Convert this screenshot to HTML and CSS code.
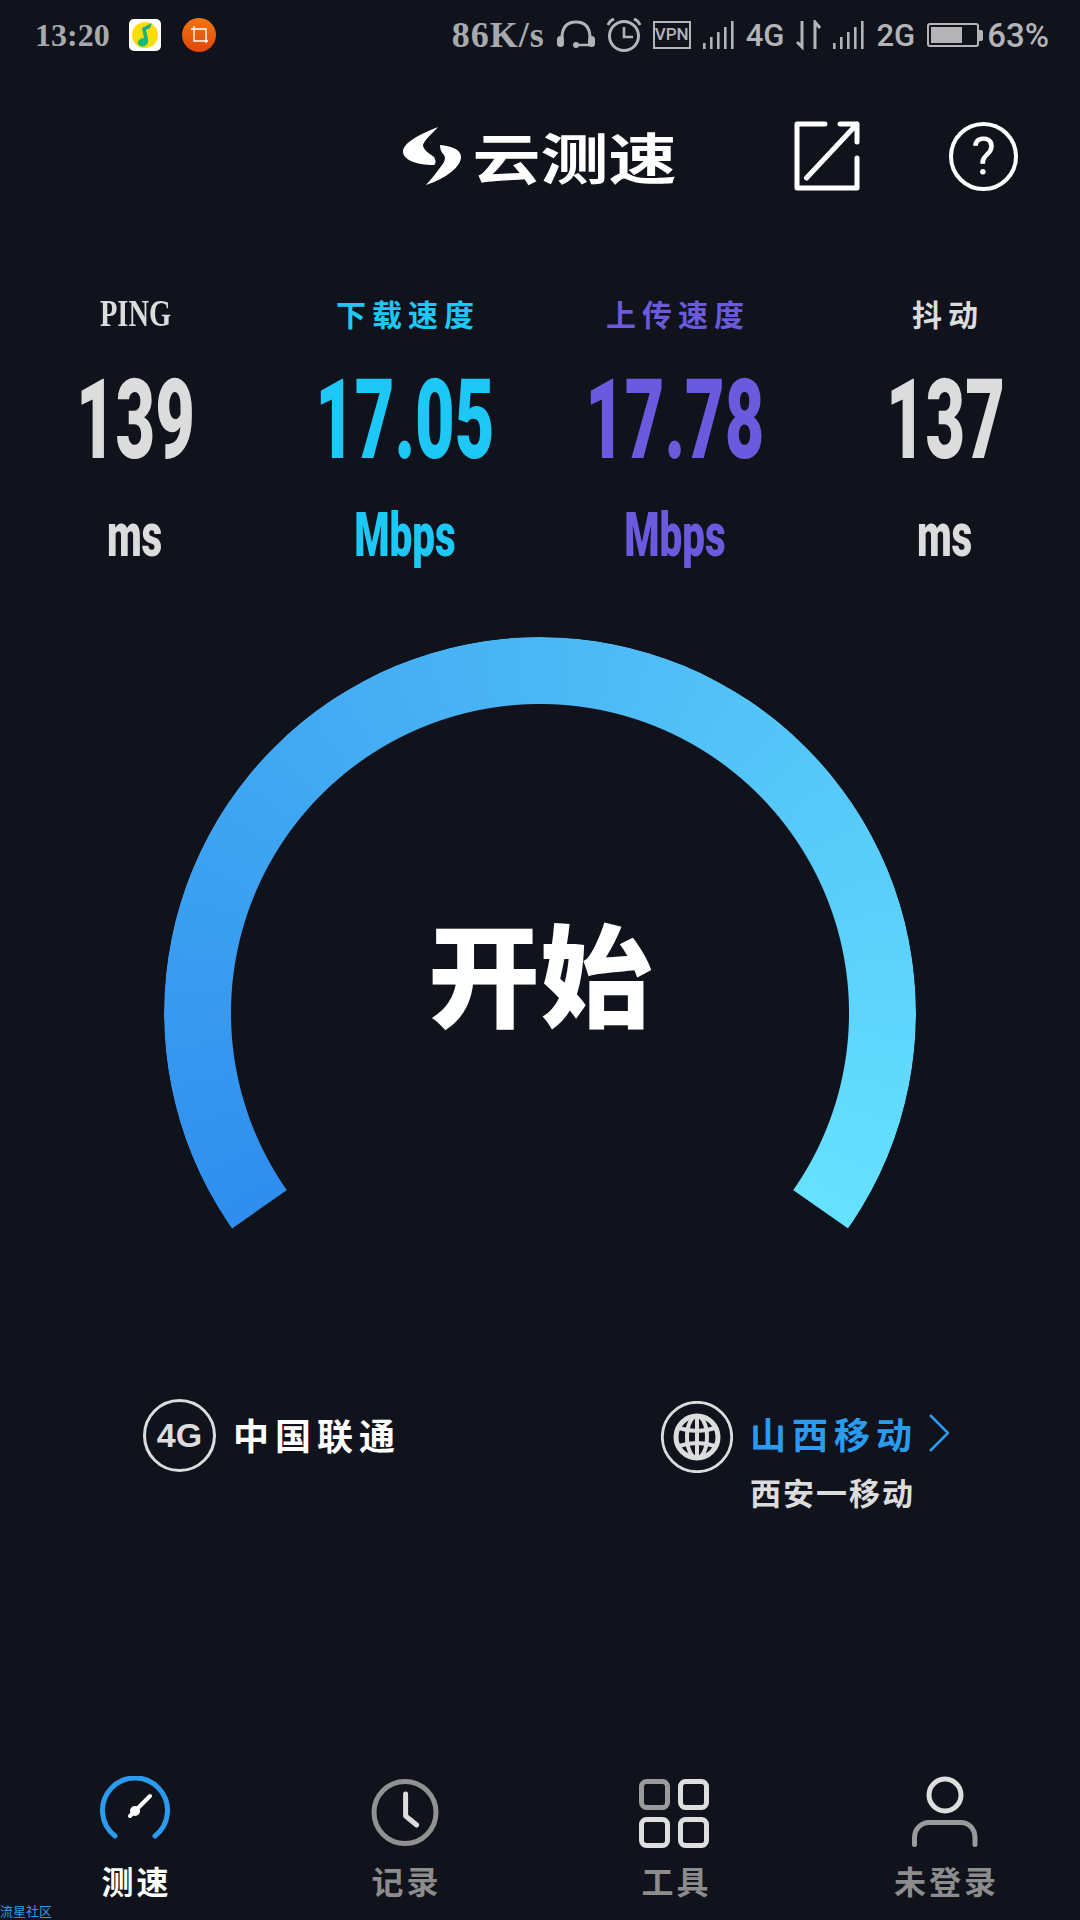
FILE: index.html
```html
<!DOCTYPE html>
<html lang="zh">
<head>
<meta charset="utf-8">
<title>云测速</title>
<link rel="stylesheet" href="styles.css">
</head>
<body>
<div class="app">
  <div class="status">
    <div class="status-left">
      <span class="time">13:20</span>
      <svg class="qq" viewBox="0 0 32 32"><defs><linearGradient id="note" x1="0" y1="0" x2="0" y2="1"><stop offset="0" stop-color="#12a8a0"/><stop offset="1" stop-color="#14c06f"/></linearGradient></defs><rect width="32" height="32" rx="5" fill="#fff"/><circle cx="16" cy="16" r="13" fill="#ffdd00"/><path d="M14 14 L13 9 L23 4 L21 9 L17 11 L19 20 C20 26 15 29 11 27 C7 25 9 19 15 19 Z" fill="url(#note)"/></svg>
      <svg class="crop" viewBox="0 0 34 34"><defs><linearGradient id="og" x1="0" y1="0" x2="0" y2="1"><stop offset="0" stop-color="#f0750f"/><stop offset="1" stop-color="#e2460c"/></linearGradient></defs><circle cx="17" cy="17" r="17" fill="url(#og)"/><path d="M9 11H24V25M12 8V23H26" fill="none" stroke="#fff" stroke-width="1.4"/></svg>
    </div>
    <div class="status-right">
      <span class="speed">86K/s</span>
      <svg class="ic-head" viewBox="0 0 38 30"><path d="M5 18C5 7 10 2 19 2S33 7 33 18" fill="none" stroke="#b4b4b8" stroke-width="3"/><rect x="0" y="16" width="7" height="11" rx="3.5" fill="#b4b4b8"/><rect x="31" y="16" width="7" height="11" rx="3.5" fill="#b4b4b8"/><circle cx="19" cy="25" r="3" fill="#b4b4b8"/><path d="M19 25H33" stroke="#b4b4b8" stroke-width="2.5"/></svg>
      <svg class="ic-alarm" viewBox="0 0 34 34"><circle cx="17" cy="18" r="14.5" fill="none" stroke="#b4b4b8" stroke-width="3"/><path d="M17 9V19H26" fill="none" stroke="#b4b4b8" stroke-width="2.6"/><path d="M1 7C2 4 4 2 7 1M33 7C32 4 30 2 27 1" fill="none" stroke="#b4b4b8" stroke-width="3"/></svg>
      <span class="vpn">VPN</span>
      <svg class="ic-signal" viewBox="0 0 31 28"><rect x="0" y="22" width="2.6" height="6" fill="#b4b4b8"/><rect x="7" y="16" width="2.6" height="12" fill="#b4b4b8"/><rect x="14" y="11" width="2.6" height="17" fill="#b4b4b8"/><rect x="21" y="6" width="2.6" height="22" fill="#b4b4b8"/><rect x="28" y="0" width="2.6" height="28" fill="#b4b4b8"/></svg>
      <span class="net">4G</span>
      <svg class="ic-arrows" viewBox="0 0 25 30"><path d="M6 1V27L1 22M19 29V2L24 8" fill="none" stroke="#b4b4b8" stroke-width="3"/></svg>
      <svg class="ic-signal" viewBox="0 0 31 28"><rect x="0" y="22" width="2.6" height="6" fill="#b4b4b8"/><rect x="7" y="16" width="2.6" height="12" fill="#b4b4b8"/><rect x="14" y="11" width="2.6" height="17" fill="#b4b4b8"/><rect x="21" y="6" width="2.6" height="22" fill="#b4b4b8"/><rect x="28" y="0" width="2.6" height="28" fill="#b4b4b8"/></svg>
      <span class="net">2G</span>
      <div class="battery"><div class="battery-body"><div class="battery-level"></div></div><div class="battery-cap"></div></div>
      <span class="percent">63%</span>
    </div>
  </div>

  <header class="header">
    <div></div>
    <div class="logo">
      <svg class="logo-mark" viewBox="0 0 58 58"><path d="M35 0C15 8 0 16 0 25C0 32 12 38 31 38C33 37 33 33 31 30C27 27 20 23 20 18C22 12 30 6 35 0Z" fill="#fff"/><path d="M23 58C42 52 58 40 58 30C58 22 48 19 37 18C37 22 38 25 41 28C44 33 39 38 36 42C32 48 27 53 23 58Z" fill="#fff"/></svg>
      <span class="logo-text">云测速</span>
    </div>
    <div class="actions">
      <svg class="share" viewBox="0 0 66 70"><path d="M31 3H3V67H63V37M46 3H63V21M63 3L12.500 57" fill="none" stroke="#fff" stroke-width="5" stroke-linecap="round" stroke-linejoin="round"/></svg>
      <div class="help">?</div>
    </div>
  </header>

  <section class="stats">
    <div class="stat stat-grey"><div class="stat-label"><span class="latin">PING</span></div><div class="stat-num"><span class="squeeze">139</span></div><div class="stat-unit"><span class="squeeze">ms</span></div></div>
    <div class="stat stat-blue"><div class="stat-label">下载速度</div><div class="stat-num"><span class="squeeze">17.05</span></div><div class="stat-unit"><span class="squeeze">Mbps</span></div></div>
    <div class="stat stat-purple"><div class="stat-label">上传速度</div><div class="stat-num"><span class="squeeze">17.78</span></div><div class="stat-unit"><span class="squeeze">Mbps</span></div></div>
    <div class="stat stat-grey"><div class="stat-label">抖动</div><div class="stat-num"><span class="squeeze">137</span></div><div class="stat-unit"><span class="squeeze">ms</span></div></div>
  </section>

  <section class="gauge">
    <div class="gauge-arc"></div>
    <div class="gauge-start">开始</div>
  </section>

  <section class="info">
    <div class="info-item info-client">
      <div class="badge">4G</div>
      <span class="carrier">中国联通</span>
    </div>
    <div class="info-item info-server">
      <svg class="globe" viewBox="0 0 72 72"><circle cx="36" cy="36" r="34.700" fill="none" stroke="#dcdcdc" stroke-width="2.800"/><circle cx="36" cy="36" r="21" fill="none" stroke="#dcdcdc" stroke-width="5"/><ellipse cx="36" cy="36" rx="10" ry="21" fill="none" stroke="#dcdcdc" stroke-width="4"/><path d="M18 27Q36 33 54 27M18 45Q36 39 54 45M36 15V57" fill="none" stroke="#dcdcdc" stroke-width="4"/></svg>
      <div class="server-text">
        <div class="server-top"><span class="server-name">山西移动</span><svg class="chevron" viewBox="0 0 20 38"><path d="M1 1L19 19L1 37" fill="none" stroke="#2a9cf0" stroke-width="2.600"/></svg></div>
        <div class="server-sub">西安一移动</div>
      </div>
    </div>
  </section>

  <nav class="nav">
    <div class="nav-item nav-active">
      <svg class="nav-icon" viewBox="0 0 72 74"><path d="M16 60A32.500 32.500 0 1 1 56 60" fill="none" stroke="#2a9cf0" stroke-width="5" stroke-linecap="round"/><path d="M51 20L31 40" stroke="#fff" stroke-width="4" stroke-linecap="round"/><circle cx="36" cy="35" r="5" fill="#fff"/></svg>
      <span class="nav-label">测速</span>
    </div>
    <div class="nav-item">
      <svg class="nav-icon" viewBox="0 0 72 74"><circle cx="36" cy="36.500" r="31" fill="none" stroke="#919191" stroke-width="5"/><path d="M36.600 18V40L47.700 49" fill="none" stroke="#dcdcdc" stroke-width="5" stroke-linecap="round" stroke-linejoin="round"/></svg>
      <span class="nav-label">记录</span>
    </div>
    <div class="nav-item">
      <svg class="nav-icon" viewBox="0 0 72 74"><rect x="2.500" y="5.500" width="26" height="26" rx="5" fill="none" stroke="#9a9a9a" stroke-width="5"/><rect x="41.500" y="5.500" width="26" height="26" rx="5" fill="none" stroke="#dedede" stroke-width="5"/><rect x="2.500" y="43.500" width="26" height="26" rx="5" fill="none" stroke="#dedede" stroke-width="5"/><rect x="41.500" y="43.500" width="26" height="26" rx="5" fill="none" stroke="#dedede" stroke-width="5"/></svg>
      <span class="nav-label">工具</span>
    </div>
    <div class="nav-item">
      <svg class="nav-icon" viewBox="0 0 72 74"><circle cx="36" cy="19" r="16" fill="none" stroke="#dedede" stroke-width="5"/><path d="M5.500 68.500V62C5.500 52 13 46.500 20 46.500H52C59 46.500 66 52 66 62V68.500" fill="none" stroke="#9a9a9a" stroke-width="5" stroke-linecap="round"/></svg>
      <span class="nav-label">未登录</span>
    </div>
  </nav>
  <div class="watermark">流星社区</div>
</div>
</body>
</html>
```
FILE: styles.css
```css
* { box-sizing: border-box; }
html, body { margin: 0; padding: 0; }
body { background: #10131c; font-family: "Noto Sans CJK SC", sans-serif; }
.app { position: relative; width: 1080px; height: 1920px; display: flex; flex-direction: column; overflow: hidden; background: #10131c; color: #dcdcdc; }

.status { height: 70px; display: flex; justify-content: space-between; align-items: center; padding: 0 31px 0 35px; color: #b4b4b8; }
.status-left, .status-right { display: flex; align-items: center; }
.status-right { gap: 12px; }
.time { width: 76px; font: 700 32px "Liberation Serif", serif; color: #a8a9ae; }
.qq { width: 32px; height: 32px; margin-left: 18px; }
.crop { width: 34px; height: 34px; margin-left: 21px; }
.speed { font: 700 36px "Liberation Serif", serif; color: #a8a9ae; letter-spacing: 1px; }
.ic-head { width: 38px; height: 30px; }
.ic-alarm { width: 34px; height: 34px; }
.vpn { width: 38px; height: 28px; border: 2.5px solid #b4b4b8; font: 500 17px/23px Roboto, sans-serif; text-align: center; }
.ic-signal { width: 31px; height: 28px; }
.net { font: 500 31px Roboto, sans-serif; }
.ic-arrows { width: 25px; height: 30px; }
.battery { display: flex; align-items: center; }
.battery-body { width: 52px; height: 24px; border: 2px solid #b4b4b8; border-radius: 3px; padding: 2px; }
.battery-level { width: 31px; height: 16px; background: #b4b4b8; }
.battery-cap { width: 4px; height: 11px; background: #b4b4b8; border-radius: 0 2px 2px 0; }
.percent { margin-left: -8px; font: 500 33px Roboto, sans-serif; }

.header { margin-top: 50px; height: 72px; display: grid; grid-template-columns: minmax(0, 1fr) auto minmax(0, 1fr); align-items: center; }
.logo { display: flex; align-items: center; gap: 11px; }
.logo-mark { width: 58px; height: 58px; }
.logo-text { font-size: 68px; font-weight: 700; line-height: 72px; color: #fff; transform: scaleY(.8); white-space: nowrap; }
.actions { display: flex; align-items: center; justify-content: flex-end; gap: 89px; padding-right: 62px; }
.share { width: 66px; height: 70px; }
.help { width: 69px; height: 69px; border: 4.5px solid #fff; border-radius: 50%; display: flex; align-items: center; justify-content: center; font: 400 52px Roboto, sans-serif; color: #fff; }

.stats { margin-top: 99px; display: grid; grid-template-columns: repeat(4, minmax(0, 1fr)); text-align: center; }
.stat-grey { color: #dcdcdc; }
.stat-blue { color: #1ec8f6; }
.stat-purple { color: #6a5ade; }
.stat-label { height: 44px; padding-left: 6px; font: 700 30px/44px "Noto Sans CJK SC", sans-serif; letter-spacing: 6px; }
.latin { display: inline-block; margin-left: -6px; font: 700 38px/44px "Liberation Serif", serif; letter-spacing: 0; transform: scaleX(.75); }
.stat-num { margin-top: 30px; height: 110px; display: flex; justify-content: center; font: 900 112px/110px Roboto, sans-serif; }
.stat-unit { margin-top: 25px; height: 70px; display: flex; justify-content: center; font: 900 62px/70px Roboto, sans-serif; }
.squeeze { display: block; flex: none; transform: scaleX(.61); }
.stat-unit .squeeze { transform: scaleX(.65); }

.gauge { position: relative; margin-top: 67px; height: 592px; display: flex; justify-content: center; }
.gauge-arc { flex: none; width: 752px; height: 752px; border-radius: 50%; background: conic-gradient(from 235deg, #2f8eee 0deg, #4bb7f5 125deg, #66e1ff 250deg, #66e1ff 360deg); -webkit-mask: radial-gradient(circle closest-side, transparent 308.500px, #000 309.500px); mask: radial-gradient(circle closest-side, transparent 308.500px, #000 309.500px); clip-path: polygon(50% 50%, 0 639px, 0 0, 100% 0, 100% 639px); }
.gauge-start { position: absolute; left: 0; right: 0; top: 258px; text-align: center; font-size: 112px; line-height: 150px; font-weight: 900; color: #fff; }

.info { margin-top: 170px; height: 112px; display: flex; }
.info-item { display: flex; }
.info-client { margin-left: 143px; align-items: flex-start; gap: 17px; }
.info-server { margin-left: 260px; gap: 17px; }
.badge { width: 73px; height: 73px; border: 3px solid #dcdcdc; border-radius: 50%; display: flex; align-items: center; justify-content: center; font: 700 34px "Liberation Sans", sans-serif; color: #dcdcdc; }
.carrier { font-size: 36px; font-weight: 700; line-height: 70px; letter-spacing: 6px; color: #fff; }
.globe { width: 72px; height: 72px; margin-top: 2px; }
.server-top { display: flex; align-items: center; height: 68px; gap: 11px; }
.server-name { font-size: 36px; font-weight: 700; letter-spacing: 6px; color: #2a9cf0; line-height: 68px; }
.chevron { width: 20px; height: 38px; }
.server-sub { margin-top: 6px; font-size: 31px; font-weight: 700; line-height: 38px; letter-spacing: 2px; color: #dcdcdc; white-space: nowrap; }

.nav { margin-top: auto; padding-bottom: 18px; display: grid; grid-template-columns: repeat(4, minmax(0, 1fr)); }
.nav-item { display: flex; flex-direction: column; align-items: center; }
.nav-icon { width: 72px; height: 74px; }
.nav-label { margin-top: 8px; padding-left: 3px; font-size: 32px; font-weight: 700; line-height: 44px; letter-spacing: 3px; color: #8c8c8c; }
.nav-active .nav-label { color: #fff; }
.watermark { position: absolute; left: 0; bottom: 0; font-size: 13px; line-height: 19px; color: #2a9cf0; }
```
